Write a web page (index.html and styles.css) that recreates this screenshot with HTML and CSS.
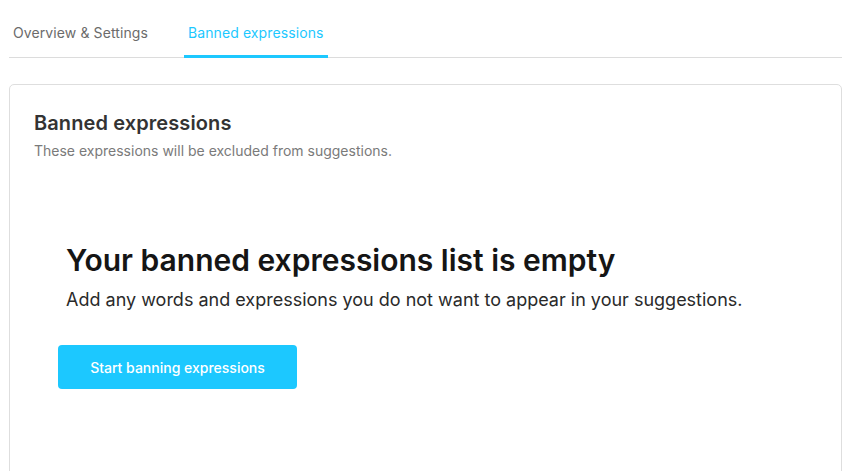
FILE: index.html
```html
<!DOCTYPE html>
<html lang="en">
<head>
<meta charset="utf-8">
<title>Banned expressions</title>
<link rel="stylesheet" href="styles.css">
</head>
<body>
<div class="page">
  <nav class="tabs">
    <a class="tab">Overview &amp; Settings</a>
    <a class="tab tab-active">Banned expressions</a>
  </nav>
  <section class="card">
    <h2 class="card-title">Banned expressions</h2>
    <p class="card-sub">These expressions will be excluded from suggestions.</p>
    <div class="empty">
      <h1 class="empty-title">Your banned expressions list is empty</h1>
      <p class="empty-text">Add any words and expressions you do not want to appear in your suggestions.</p>
      <button class="btn">Start banning expressions</button>
    </div>
  </section>
</div>
</body>
</html>
```

FILE: styles.css
```css
* { box-sizing: border-box; }
html, body { margin: 0; padding: 0; background: #fff; }
body {
  font-family: Inter, "Noto Sans", "Liberation Sans", sans-serif;
  color: #333;
  overflow: hidden;
}
.page {
  padding: 0 6px 0 9px;
}
.tabs {
  display: flex;
  gap: 32px;
  border-bottom: 1px solid #dcdcdc;
  padding-top: 23px;
}
.tab {
  display: block;
  padding: 0 4px 12px;
  font-size: 14px;
  line-height: 20px;
  letter-spacing: 0.1px;
  color: #6b6b6b;
  border-bottom: 3px solid transparent;
  margin-bottom: -1px;
}
.tab-active {
  color: #1cc8ff;
  border-bottom-color: #1cc8ff;
}
.card {
  margin-top: 26px;
  border: 1px solid #dedede;
  border-radius: 5px;
  padding: 24px 24px 120px;
}
.card-title {
  margin: 0;
  font-size: 20px;
  line-height: 28px;
  font-weight: 600;
  letter-spacing: 0.1px;
  color: #333;
}
.card-sub {
  margin: 4px 0 0;
  font-size: 14px;
  line-height: 20px;
  color: #7a7a7a;
}
.empty {
  padding: 81px 24px 0;
}
.empty-title {
  margin: 0 0 0 8px;
  font-size: 30px;
  line-height: 36px;
  font-weight: 600;
  color: #151515;
}
.empty-text {
  margin: 10px 0 0 8px;
  font-size: 18px;
  line-height: 24px;
  color: #2a2a2a;
}
.btn {
  display: block;
  margin-top: 33px;
  width: 239px;
  height: 44px;
  border: none;
  border-radius: 4px;
  background: #1cc8ff;
  color: #fff;
  font-family: inherit;
  font-size: 14px;
  font-weight: 500;
}
```
